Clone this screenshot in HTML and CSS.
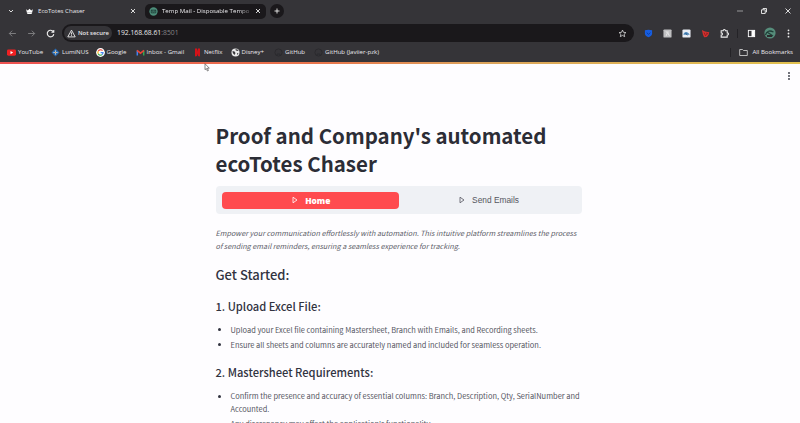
FILE: index.html
```
<!DOCTYPE html>
<html lang="en">
<head>
<meta charset="utf-8">
<title>EcoTotes Chaser</title>
<link rel="stylesheet" href="styles.css">
</head>
<body>
<div class="browser">
  <header class="chrome">
    <div class="tabs">
      <svg class="chevron" viewBox="0 0 8 8"><path d="M2 3l2 2 2-2"/></svg>
      <div class="tab">
        <svg class="favicon" viewBox="0 0 8 8"><path fill="#fff" d="M1 2l1.500 1L4 1.500l1.500 1.500L7 2 6.300 5H1.700zM2 5.400h4v.8H2z"/></svg>
        <span class="tab-title">EcoTotes Chaser</span>
        <svg class="close" viewBox="0 0 8 8"><path d="M2 2l4 4M6 2L2 6"/></svg>
      </div>
      <div class="tab inactive">
        <svg class="favicon" viewBox="0 0 10 10"><circle cx="5" cy="5" r="4.600" fill="#4d8f7b"/><path d="M2.500 3.500h5v3h-5zM2.500 3.500L5 5.500l2.500-2" fill="none" stroke="#1c3934" stroke-width=".8"/></svg>
        <span class="tab-title fade">Temp Mail - Disposable Tempo</span>
        <svg class="close" viewBox="0 0 8 8"><path d="M2 2l4 4M6 2L2 6"/></svg>
      </div>
      <div class="new-tab"><svg viewBox="0 0 8 8"><path d="M4 1.500v5M1.500 4h5"/></svg></div>
      <div class="window-buttons">
        <svg viewBox="0 0 8 8"><path d="M1 4h6" opacity=".6"/></svg>
        <svg viewBox="0 0 8 8"><path d="M1.500 2.800h3.700v3.700H1.500zM3 2.500v-1h3.500V5h-1"/></svg>
        <svg viewBox="0 0 8 8"><path d="M1.500 1.500l5 5M6.500 1.500l-5 5"/></svg>
      </div>
    </div>
    <div class="toolbar">
      <div class="nav">
        <svg class="dim" viewBox="0 0 8 8"><path d="M7 4H1.200M3.700 1.500L1.200 4l2.500 2.500"/></svg>
        <svg class="dim" viewBox="0 0 8 8"><path d="M1 4h5.800M4.300 1.500L6.800 4 4.300 6.500"/></svg>
        <svg viewBox="0 0 8 8"><path d="M6.500 2.500A2.900 2.900 0 1 0 6.900 4.500M6.900.8v2.100H4.800" stroke-width="1"/></svg>
      </div>
      <div class="address">
        <div class="security">
          <svg viewBox="0 0 8 8"><path d="M4 1l3.300 6H.7zM4 3v2M4 5.500v.7"/></svg>
          <span>Not secure</span>
        </div>
        <span class="url">192.168.68.61<span class="port">:8501</span></span>
        <svg class="star" viewBox="0 0 10 10"><path d="M5 1.200l1.100 2.500 2.700.3-2 1.800.6 2.700L5 7.100 2.600 8.500l.6-2.700-2-1.800 2.700-.3z"/></svg>
      </div>
      <div class="extensions">
        <svg viewBox="0 0 10 10"><path fill="#165de0" d="M1 1.500L5 .7l4 .8v3.800c0 2-2.500 3.400-4 4-1.500-.6-4-2-4-4z"/><path d="M3 4l2 2 2-2" stroke="#0a3b9a" fill="none"/></svg>
        <svg viewBox="0 0 10 10"><rect x=".5" y=".5" width="9" height="9" rx="1" fill="#bfbfc1"/><path d="M3.300 2.500l1.500 2-1.200 3M5.500 2.500v2l1.500 3" stroke="#eee" fill="none"/></svg>
        <svg viewBox="0 0 10 10"><rect x=".5" y=".5" width="9" height="9" rx="1.300" fill="#e9edf4"/><path d="M1.500 6.500C2 3 6 1.500 8.500 6.500z" fill="#4d88bc"/><path d="M4 4.500l2 2.500" stroke="#225785"/></svg>
        <svg viewBox="0 0 10 10"><path d="M1 1.200l3.500 1.600 4.700.7-.7 3-2 2.500-3 .3-1.300-3z" fill="#d3302e"/><path d="M3.500 4l1.500 3.500L7.500 5l-2-.5" stroke="#7b1719" stroke-width=".7" fill="none"/></svg>
        <svg viewBox="0 0 10 10"><path d="M1.300 2h2.200c0-2 2.500-2 2.500 0h2v2.300c2 0 2 2.400 0 2.400V9H1.300V6.800c2 0 2-2.500 0-2.500z" fill="none" stroke="#eee" stroke-width="1.200"/></svg>
      </div>
      <i class="divider"></i>
      <div class="profile">
        <svg viewBox="0 0 10 10"><rect x="1.500" y="1.500" width="7" height="7" fill="none" stroke="#fff" stroke-width="1"/><path d="M5 1.500h3.500v7H5z" fill="#fff"/></svg>
        <svg class="avatar" viewBox="0 0 12 12"><circle cx="6" cy="6" r="5.600" fill="#568d7b"/><path d="M1.500 8c1-4 4-5 8-3M3 5l6 4" stroke="#213f38" stroke-width="1.300" fill="none"/><path d="M3 9h5" stroke="#2b2b2d" stroke-width="2"/></svg>
        <svg viewBox="0 0 10 10" fill="#eee"><circle cx="5" cy="1.500" r="1"/><circle cx="5" cy="5" r="1"/><circle cx="5" cy="8.500" r="1"/></svg>
      </div>
    </div>
    <nav class="bookmarks">
      <a><svg viewBox="0 0 9 9"><rect x="0" y="1.500" width="9" height="6.200" rx="1.400" fill="#f02022"/><path fill="#fff" d="M3.500 3l2.600 1.600-2.600 1.600z"/></svg><span>YouTube</span></a>
      <a><svg viewBox="0 0 9 9"><path fill="#2b69ae" d="M4.500.5l4 4-4 4-4-4z"/><path d="M4.500 2.300v4.400M2.300 4.500h4.400" stroke="#d9e8f3" stroke-width=".7"/><circle cx="4.500" cy="4.500" r=".8" fill="#e1a34b"/></svg><span>LumiNUS</span></a>
      <a><svg viewBox="0 0 9 9"><circle cx="4.500" cy="4.500" r="4.400" fill="#fff"/><g fill="none" stroke-width="1.100"><path d="M6.500 2.700a2.600 2.600 0 0 0-4.300.6" stroke="#ea4335"/><path d="M2.200 3.300a2.600 2.600 0 0 0 0 2.400" stroke="#fbbc05"/><path d="M2.200 5.700a2.600 2.600 0 0 0 4 .9" stroke="#34a853"/><path d="M6.200 6.600a2.600 2.600 0 0 0 .9-2H4.600" stroke="#4285f4"/></g></svg><span>Google</span></a>
      <a><svg viewBox="0 0 9 9"><path d="M1.300 7.500v-5" stroke="#4285f4" stroke-width="1.500"/><path d="M7.700 7.500v-5" stroke="#34a853" stroke-width="1.500"/><path d="M1 2.300l3.500 2.900L8 2.300" stroke="#ea4335" stroke-width="1.500" fill="none"/></svg><span>Inbox - Gmail</span></a>
      <a><svg viewBox="0 0 9 9"><path d="M2 .5h2l1 3v-3h2v8.100L5 8 4 5.500V8l-2 .6z" fill="#d51218"/></svg><span>Netflix</span></a>
      <a><svg viewBox="0 0 9 9"><circle cx="4.500" cy="4.500" r="4" fill="#e8e8e9"/><path d="M1.500 3l2 .5L4.500 5 3.500 7 1.800 5M4.500 1l.3 1.500L7 3l.6-1M6 5l1.500.4L6.300 7z" fill="#38373b"/></svg><span>Disney+</span></a>
      <a><svg viewBox="0 0 9 9"><circle cx="4.500" cy="4.500" r="3.600" fill="none" stroke="#2b2a2e" stroke-width="1"/><path d="M3 8V6h3v2" stroke="#2b2a2e" fill="none"/></svg><span>GitHub</span></a>
      <a><svg viewBox="0 0 9 9"><circle cx="4.500" cy="4.500" r="3.600" fill="none" stroke="#2b2a2e" stroke-width="1"/><path d="M3 8V6h3v2" stroke="#2b2a2e" fill="none"/></svg><span>GitHub (Javiier-pzk)</span></a>
      <div class="all-bookmarks"><i class="divider"></i><svg viewBox="0 0 9 9"><path d="M.7 1.500h2.800l1 1h3.800v5H.7z" fill="none" stroke="#ddd" stroke-width=".8"/></svg><span>All Bookmarks</span></div>
    </nav>
  </header>
  <div class="decoration"></div>
  <svg class="pointer" viewBox="0 0 6 9"><path d="M1 .7v6l1.400-1.200 1 2.500 1-.5-1-2.300h1.900z" fill="#fff" stroke="#555" stroke-width=".7"/></svg>
  <svg class="page-menu" viewBox="0 0 4 10"><circle cx="2" cy="2" r=".9"/><circle cx="2" cy="5" r=".9"/><circle cx="2" cy="8" r=".9"/></svg>
  <main class="content">
    <h1><span>Proof and Company's automated</span><br><span>ecoTotes Chaser</span></h1>
    <div class="menu">
      <div class="option selected"><svg viewBox="0 0 6 8"><path d="M1 1.200L5 4 1 6.800z"/></svg><span>Home</span></div>
      <div class="option"><svg viewBox="0 0 6 8"><path d="M1 1.200L5 4 1 6.800z"/></svg><span>Send Emails</span></div>
    </div>
    <p class="intro">Empower your communication effortlessly with automation. This intuitive platform streamlines the process<br>of sending email reminders, ensuring a seamless experience for tracking.</p>
    <h2><span>Get Started:</span></h2>
    <h3><span>1. Upload Excel File:</span></h3>
    <ul>
      <li>Upload your Excel file containing Mastersheet, Branch with Emails, and Recording sheets.</li>
      <li>Ensure all sheets and columns are accurately named and included for seamless operation.</li>
    </ul>
    <h3><span>2. Mastersheet Requirements:</span></h3>
    <ul>
      <li>Confirm the presence and accuracy of essential columns: Branch, Description, Qty, SerialNumber and<br>Accounted.</li>
      <li>Any discrepancy may affect the application's functionality.</li>
    </ul>
  </main>
</div>
</body>
</html>
```
FILE: styles.css
```
* { box-sizing: border-box; }
html, body { margin: 0; height: 100%; overflow: hidden; }
body { background: #fefdff; color: #31333f; font-family: "Noto Sans CJK SC", "Open Sans", sans-serif; }
svg { display: block; flex: none; overflow: visible; }
.browser { position: relative; width: 800px; height: 423px; overflow: hidden; }

.chrome { height: 62px; background: #353438; color: #e9e8eb; font: 6.1px/10px "Open Sans", sans-serif; }
.chrome svg { width: 9px; height: 9px; }
.tabs { display: flex; align-items: center; height: 22px; padding-left: 7px; }
.tabs path { stroke-width: .9; }
.chevron, .close, .new-tab svg, .window-buttons svg, .nav svg, .security svg, .star { fill: none; stroke: #eee; stroke-width: .8; }
.chrome .chevron { width: 8px; height: 8px; }
.tab { display: flex; align-items: center; width: 128px; height: 15px; padding: 0 6px 0 10px; margin-right: 2px; }
.tab-title { flex: 1; margin-left: 4px; white-space: nowrap; }
.tab .favicon { stroke: none; }
.chrome .tab .close { width: 8px; height: 8px; }
.inactive { width: 121px; margin-right: 4px; padding: 0 4px; background: #1a181b; border-radius: 5px; }
.inactive .tab-title { margin-right: 3px; }
.fade { mask-image: linear-gradient(90deg, #000 86%, #0003); }
.new-tab { display: grid; place-items: center; width: 14px; height: 14px; border-radius: 50%; background: #1a181b; }
.chrome .new-tab svg { width: 8px; height: 8px; }
.window-buttons { display: flex; gap: 16px; margin-left: auto; padding-right: 8px; }
.chrome .window-buttons svg { width: 8px; height: 8px; }

.toolbar { display: flex; align-items: center; height: 22px; }
.nav { display: flex; width: 62px; padding-left: 8px; gap: 10px; }
.nav .dim { stroke: #858487; }
.address { display: flex; align-items: center; width: 572px; height: 18px; border-radius: 9px; background: #1a181b; padding: 0 7px 0 2px; }
.security { display: flex; align-items: center; gap: 2px; width: 48px; height: 14px; padding-left: 3px; border-radius: 7px; background: #353438; font-weight: 600; font-size: 5.9px; white-space: nowrap; }
.url { flex: 1; margin-left: 5px; font-size: 6.8px; }
.port { color: #858487; }
.extensions { display: flex; gap: 10px; padding-left: 10px; }
.divider { width: 1px; height: 9px; background: #242327; }
.extensions + .divider { margin-left: 8px; }
.profile { display: flex; align-items: center; gap: 8.300px; margin-left: 8.500px; }
.chrome .avatar { width: 12px; height: 12px; }

.bookmarks { display: grid; grid-template-columns: 44px 44.500px 40px 57.500px 37.500px 43.500px 40px 90px 1fr; align-items: center; height: 16px; padding: 0 7px; white-space: nowrap; }
.bookmarks a { display: flex; align-items: center; gap: 2px; }
.all-bookmarks { display: flex; align-items: center; justify-content: flex-end; gap: 4px; }
.all-bookmarks .divider { margin-right: 4px; }

.decoration { height: 2px; background: linear-gradient(90deg, #ed5151, #e8754c 40%, #dba35b 60%, #e1c14f); }
.pointer { position: absolute; left: 204px; top: 63px; width: 6px; height: 9px; }
.page-menu { position: absolute; left: 787px; top: 71px; width: 4px; height: 10px; fill: #31333f; }

.content { width: 366.500px; margin: 58px 0 0 215.500px; }
h1, h2, h3, p, ul { margin: 0; padding: 0; white-space: nowrap; }
h1 { font-size: 20.48px; line-height: 27.500px; font-weight: 700; color: #2c2d36; }
.menu { display: grid; grid-template-columns: 177px 1fr; gap: 0; height: 28px; margin-top: 9px; padding: 5.500px 6px; border-radius: 4px; background: #eff1f5; font: 8.350px/17px "Liberation Sans", sans-serif; }
.option { display: flex; align-items: center; justify-content: center; gap: 7.500px; border-radius: 4px; color: #55565f; }
.option:last-child { padding-left: 3px; }
.option svg { width: 6px; height: 8px; fill: none; stroke: currentColor; stroke-width: .8; }
.selected { padding-left: 2px; background: #ff4b4f; color: #fff; font-family: "Open Sans", sans-serif; font-weight: 800; }
.intro { margin-top: 13px; font-size: 7.25px; line-height: 13.300px; font-style: italic; color: #60616a; }
h2 { margin-top: 11px; font-size: 13px; line-height: 20px; font-weight: 500; }
h3 { margin-top: 13px; font-size: 11.150px; line-height: 16px; font-weight: 500; }
ul { margin-top: 9px; list-style: none; font-size: 7.46px; line-height: 13.300px; color: #55565f; }
li { position: relative; padding-left: 15px; margin-bottom: 1.700px; }
ul + h3 { margin-top: 13.300px; }
li::before { content: ""; position: absolute; left: 2px; top: 5.500px; width: 3px; height: 3px; border-radius: 50%; background: #31333f; }
```
